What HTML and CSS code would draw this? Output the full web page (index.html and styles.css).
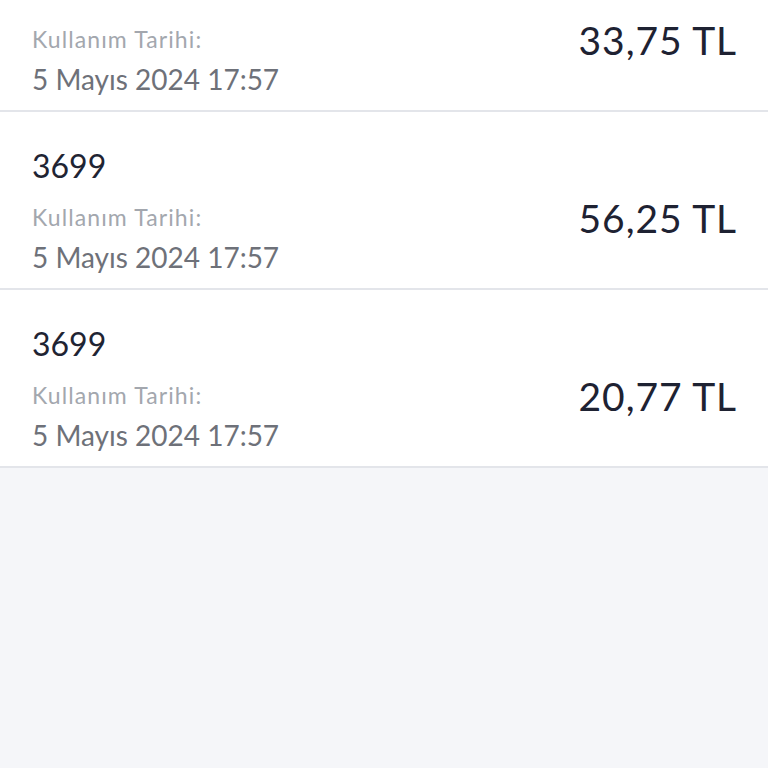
FILE: index.html
```html
<!DOCTYPE html>
<html lang="tr">

<head>
    <meta charset="UTF-8">
    <meta name="viewport" content="width=device-width, initial-scale=1.0">
    <title>Kullanım Geçmişi</title>
    <link rel="stylesheet" href="styles.css">
</head>

<body>
    <div class="list">
        <div class="item">
            <div class="info">
                <div class="code">3699</div>
                <div class="label">Kullanım Tarihi:</div>
                <div class="date">5 Mayıs 2024 17:57</div>
            </div>
            <div class="amount">33,75 TL</div>
        </div>

        <div class="item">
            <div class="info">
                <div class="code">3699</div>
                <div class="label">Kullanım Tarihi:</div>
                <div class="date">5 Mayıs 2024 17:57</div>
            </div>
            <div class="amount">56,25 TL</div>
        </div>

        <div class="item">
            <div class="info">
                <div class="code">3699</div>
                <div class="label">Kullanım Tarihi:</div>
                <div class="date">5 Mayıs 2024 17:57</div>
            </div>
            <div class="amount">20,77 TL</div>
        </div>
    </div>
</body>

</html>
```

FILE: styles.css
```css
html,
body {
    margin: 0;
    height: 100%;
}

body {
    font-family: Lato, "Noto Sans", sans-serif;
    background-color: #f5f6f9;
    overflow: hidden;
}

.list {
    margin-top: -66px;
    background: #fff;
}

.item {
    display: flex;
    justify-content: space-between;
    align-items: flex-start;
    height: 176px;
    padding: 0 31px 0 32px;
    border-bottom: 2px solid #e3e5ea;
}

.info {
    display: flex;
    flex-direction: column;
    padding-top: 34px;
}

.code {
    font-size: 32px;
    line-height: 40px;
    color: #1f2433;
}

.label {
    margin-top: 16px;
    font-size: 23px;
    line-height: 30px;
    letter-spacing: 1.1px;
    color: #a3a7ae;
}

.date {
    margin-top: 7px;
    font-size: 28px;
    line-height: 36px;
    color: #6e7179;
}

.amount {
    padding-top: 82px;
    font-size: 39px;
    line-height: 48px;
    letter-spacing: 0.9px;
    color: #1e2232;
}
```
